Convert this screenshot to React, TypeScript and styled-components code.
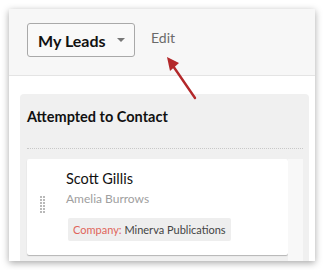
import styled, { createGlobalStyle } from "styled-components";

const GlobalStyle = createGlobalStyle`
  html, body {
    margin: 0;
    padding: 0;
    background: #ffffff;
  }
  body {
    font-family: Lato, "Open Sans", Arial, sans-serif;
    color: #222;
  }
`;

type Props = {
  name: string;
  contact: string;
  company: string;
};

const LeadCard = (props: Props) => {
  return (
    <CardRow>
      <Card>
        <DragHandle>
          {Array.from({ length: 12 }).map((_, i) => (
            <Dot key={i} />
          ))}
        </DragHandle>
        <CardBody>
          <LeadName>{props.name}</LeadName>
          <ContactName>{props.contact}</ContactName>
          <CompanyTag>
            <TagLabel>Company:</TagLabel> {props.company}
          </CompanyTag>
        </CardBody>
      </Card>
      <ScrollStrip />
    </CardRow>
  );
};

const App = () => {
  return (
    <>
      <GlobalStyle />
      <Window>
        <Header>
          <ViewSelect>
            My Leads
            <Caret />
          </ViewSelect>
          <EditLink>Edit</EditLink>
        </Header>
        <Board>
          <Column>
            <ColumnTitle>Attempted to Contact</ColumnTitle>
            <Divider />
            <LeadCard
              name="Scott Gillis"
              contact="Amelia Burrows"
              company="Minerva Publications"
            />
          </Column>
        </Board>
        <Pointer width="40" height="50" viewBox="0 0 40 50">
          <line x1="33" y1="45" x2="9" y2="10" stroke="#b3282a" strokeWidth="2.4" strokeLinecap="round" />
          <polygon points="5,4 17,10 8,18" fill="#b3282a" />
        </Pointer>
      </Window>
    </>
  );
};

export default App;

// 影付きの外枠
const Window = styled.div`
  position: relative;
  margin: 9px;
  width: 306px;
  height: 252px;
  background: #ffffff;
  overflow: hidden;
  box-shadow: 0 2px 7px rgba(0, 0, 0, 0.35);
  display: flex;
  flex-direction: column;
`;

const Header = styled.div`
  height: 67px;
  flex-shrink: 0;
  background: #f7f7f7;
  border-bottom: 1px solid #e4e4e4;
  display: flex;
  align-items: flex-start;
  padding: 14px 0 0 18px;
  box-sizing: border-box;
  gap: 16px;
`;

const ViewSelect = styled.div`
  box-sizing: border-box;
  width: 108px;
  height: 34px;
  border: 1px solid #a9a9a9;
  border-radius: 3px;
  background: #f9f9f9;
  display: flex;
  align-items: center;
  padding-left: 10px;
  font-size: 16px;
  font-weight: 700;
  color: #111;
`;

// ドロップダウンの三角
const Caret = styled.span`
  margin-left: 11px;
  width: 0;
  height: 0;
  border-left: 4px solid transparent;
  border-right: 4px solid transparent;
  border-top: 4px solid #777;
`;

const EditLink = styled.div`
  margin-top: 6px;
  font-size: 14px;
  color: #6a6a6a;
`;

const Board = styled.div`
  flex: 1;
  padding: 18px 6px 0 11px;
  display: flex;
  min-height: 0;
`;

const Column = styled.div`
  flex: 1;
  background: #f0f0f0;
  border-radius: 4px 4px 0 0;
  padding: 0 6px 0 7px;
  display: flex;
  flex-direction: column;
`;

const ColumnTitle = styled.div`
  height: 44px;
  padding-top: 14px;
  box-sizing: border-box;
  font-size: 14.5px;
  font-weight: 700;
  color: #111;
`;

const Divider = styled.div`
  border-top: 1px dotted #c8c8c8;
  margin-top: 10px;
`;

const CardRow = styled.div`
  margin-top: 10px;
  display: flex;
  flex: 1;
`;

const Card = styled.div`
  width: 261px;
  height: 96px;
  background: #ffffff;
  border-radius: 2px;
  box-shadow: 0 1px 1px rgba(0, 0, 0, 0.25);
  display: flex;
`;

const ScrollStrip = styled.div`
  flex: 1;
  background: #f8f8f8;
`;

const DragHandle = styled.div`
  width: 6px;
  margin: 37px 0 0 13px;
  display: grid;
  grid-template-columns: 2px 2px;
  column-gap: 1px;
  row-gap: 1px;
  align-content: start;
`;

const Dot = styled.span`
  width: 2px;
  height: 2px;
  background: #b9b9b9;
`;

const CardBody = styled.div`
  margin-left: 20px;
  padding-top: 11px;
  display: flex;
  flex-direction: column;
  align-items: flex-start;
`;

const LeadName = styled.div`
  font-size: 14.5px;
  color: #111;
`;

const ContactName = styled.div`
  margin-top: 4px;
  font-size: 12px;
  color: #a0a0a0;
`;

const CompanyTag = styled.div`
  margin-top: 12px;
  margin-left: 2px;
  padding: 5px 5px;
  background: #eeeeee;
  border-radius: 2px;
  font-size: 11px;
  color: #444;
`;

const TagLabel = styled.span`
  color: #e0655b;
`;

// 「Edit」を指す赤い矢印
const Pointer = styled.svg`
  position: absolute;
  left: 153px;
  top: 44px;
`;
